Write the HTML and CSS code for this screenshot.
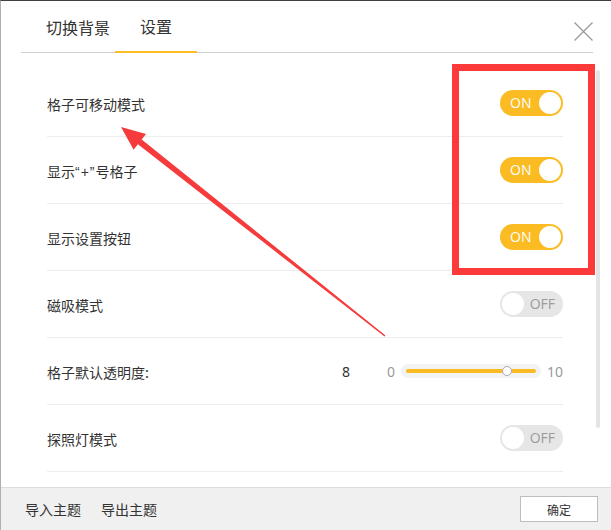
FILE: index.html
```html
<!DOCTYPE html>
<html lang="zh-CN">
<head>
<meta charset="utf-8">
<title>设置</title>
<link rel="stylesheet" href="styles.css">
</head>
<body>
<div class="dialog">
  <div class="header">
    <div class="tab tab-first">切换背景</div>
    <div class="tab active">设置</div>
    <button class="close" aria-label="关闭">
      <svg width="19" height="19" viewBox="0 0 19 19"><path d="M0.5 0.5 L18.5 18.5 M18.5 0.5 L0.5 18.5" stroke="#9a9a9a" stroke-width="1.3" fill="none"/></svg>
    </button>
  </div>
  <div class="content">
    <div class="list">
      <div class="row">
        <span class="label">格子可移动模式</span>
        <div class="toggle on"><span class="toggle-text">ON</span><span class="knob"></span></div>
      </div>
      <div class="row">
        <span class="label">显示<span class="latin">“+”</span>号格子</span>
        <div class="toggle on"><span class="toggle-text">ON</span><span class="knob"></span></div>
      </div>
      <div class="row">
        <span class="label">显示设置按钮</span>
        <div class="toggle on"><span class="toggle-text">ON</span><span class="knob"></span></div>
      </div>
      <div class="row">
        <span class="label">磁吸模式</span>
        <div class="toggle off"><span class="knob"></span><span class="toggle-text">OFF</span></div>
      </div>
      <div class="row">
        <span class="label">格子默认透明度:</span>
        <div class="slider-group">
          <span class="value">8</span>
          <span class="limit">0</span>
          <div class="track"><div class="fill"></div><span class="thumb" style="left: 106px"></span></div>
          <span class="limit">10</span>
        </div>
      </div>
      <div class="row">
        <span class="label">探照灯模式</span>
        <div class="toggle off"><span class="knob"></span><span class="toggle-text">OFF</span></div>
      </div>
    </div>
    <div class="scroll-thumb"></div>
  </div>
  <div class="footer">
    <span class="footer-link">导入主题</span>
    <span class="footer-link">导出主题</span>
    <button class="ok">确定</button>
  </div>
  <div class="highlight-box"></div>
  <svg class="arrow" width="611" height="530" viewBox="0 0 611 530">
    <polygon fill="#f53b3b" points="121,127 146,134.1 141.7,139.5 385.5,335.4 384.5,336.6 137.9,144.3 133.6,149.7"/>
  </svg>
</div>
</body>
</html>
```
FILE: styles.css
```css
* { box-sizing: border-box; }
html, body { margin: 0; padding: 0; background: #fff; }
body {
  font-family: "Noto Sans CJK SC", "Noto Sans", sans-serif;
  color: #333;
}
.dialog {
  position: relative;
  width: 611px;
  height: 530px;
  border-top: 1px solid #3f3f3f;
  border-left: 1px solid #b0b0b0;
  overflow: hidden;
  display: flex;
  flex-direction: column;
  background: #fff;
}
.header {
  display: flex;
  height: 52px;
  margin: 0 18px 0 20px;
  border-bottom: 1px solid #cfcfcf;
  flex-shrink: 0;
}
.tab {
  display: flex;
  align-items: center;
  font-size: 16px;
  line-height: 20px;
  color: #333;
  padding: 0 25px;
}
.tab-first { padding: 0 5px 0 25px; }
.tab.active {
  border-bottom: 2px solid #fbbc26;
  margin-bottom: -1px;
}
.close {
  margin-left: auto;
  align-self: flex-start;
  margin-top: 21px;
  width: 19px;
  height: 19px;
  padding: 0;
  border: 0;
  background: transparent;
  display: block;
}
.close svg { display: block; }
.content {
  position: relative;
  height: 434px;
  flex-shrink: 0;
  overflow: hidden;
  padding-top: 17px;
}
.list { margin: 0 48px 0 46px; }
.row {
  height: 67px;
  border-bottom: 1px solid #ededed;
  display: flex;
  align-items: center;
  justify-content: space-between;
}
.label {
  font-size: 14px;
  line-height: 20px;
  color: #333;
  padding-top: 2px;
}
.latin {
  font-family: "Liberation Sans", sans-serif;
  letter-spacing: 1px;
}
.toggle {
  width: 63px;
  height: 26px;
  border-radius: 13px;
  display: flex;
  align-items: center;
  justify-content: space-between;
}
.toggle.on { background: #fbbb22; padding: 0 2px 0 10px; }
.toggle.off { background: #e6e6e6; padding: 0 8px 0 2px; }
.knob {
  width: 22px;
  height: 22px;
  border-radius: 50%;
  background: #fff;
}
.toggle-text {
  font-family: "Open Sans", "Noto Sans", sans-serif;
  font-size: 14px;
  line-height: 16px;
}
.toggle.on .toggle-text { color: #fff; font-weight: 500; }
.toggle.off .toggle-text { color: #9b9b9b; }
.slider-group {
  display: flex;
  align-items: center;
}
.value {
  font-family: "Noto Sans", sans-serif;
  font-size: 14px;
  color: #333;
  margin-right: 37px;
}
.limit {
  font-family: "Noto Sans", sans-serif;
  font-size: 14px;
  color: #999;
}
.track {
  position: relative;
  width: 140px;
  height: 14px;
  margin: 0 6px;
  padding: 0 5px;
  border-radius: 7px;
  background: #f3f3f3;
  display: flex;
  align-items: center;
}
.fill {
  width: 100%;
  height: 4px;
  border-radius: 2px;
  background: #fbbb22;
}
.thumb {
  position: absolute;
  top: 2px;
  width: 10px;
  height: 10px;
  margin-left: -5px;
  border-radius: 50%;
  background: #fff;
  border: 1px solid #aaa;
}
.scroll-thumb {
  position: absolute;
  left: 595px;
  top: 17px;
  width: 4px;
  height: 358px;
  border-radius: 2px;
  background: #e4e4e4;
}
.footer {
  height: 43px;
  flex-shrink: 0;
  background: #f0f0f0;
  border-top: 1px solid #dcdcdc;
  display: flex;
  align-items: center;
  gap: 20px;
  padding: 0 13px 0 24px;
}
.footer-link {
  font-size: 14px;
  line-height: 20px;
  color: #333;
}
.ok {
  margin-left: auto;
  width: 78px;
  height: 26px;
  background: #fff;
  border: 1px solid #bdbdbd;
  font-family: "Noto Sans CJK SC", sans-serif;
  font-size: 12px;
  color: #333;
  padding: 0;
}
.highlight-box {
  position: absolute;
  left: 451px;
  top: 63px;
  width: 143px;
  height: 211px;
  border: 7px solid #fc3a3a;
  pointer-events: none;
}
.arrow {
  position: absolute;
  left: -1px;
  top: -1px;
  pointer-events: none;
}
```
